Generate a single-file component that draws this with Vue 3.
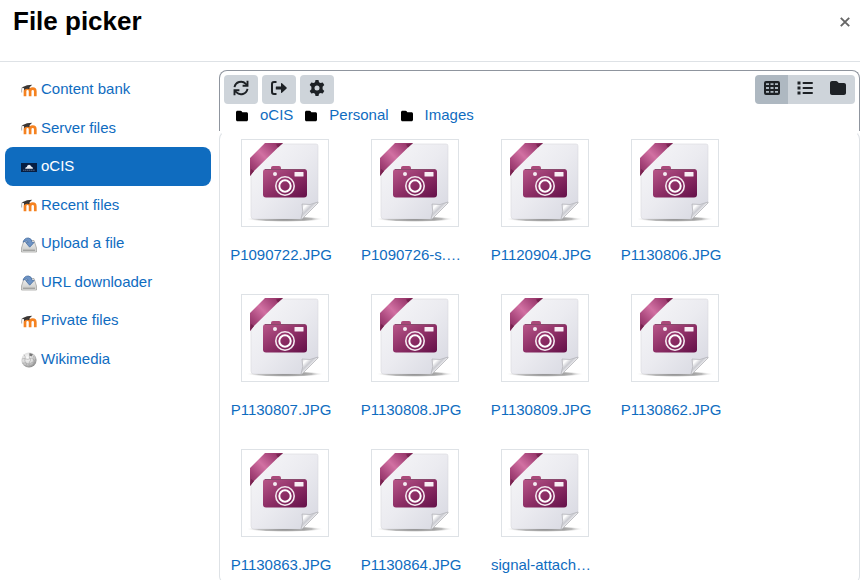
<script setup>
import { ref } from 'vue'

const sources = [
  { name: 'Content bank', icon: 'moodle' },
  { name: 'Server files', icon: 'moodle' },
  { name: 'oCIS', icon: 'ocis' },
  { name: 'Recent files', icon: 'moodle' },
  { name: 'Upload a file', icon: 'drive' },
  { name: 'URL downloader', icon: 'drive' },
  { name: 'Private files', icon: 'moodle' },
  { name: 'Wikimedia', icon: 'globe' },
]
const active = ref('oCIS')
const crumbs = ['oCIS', 'Personal', 'Images']
const files = [
  'P1090722.JPG', 'P1090726-s.…', 'P1120904.JPG', 'P1130806.JPG',
  'P1130807.JPG', 'P1130808.JPG', 'P1130809.JPG', 'P1130862.JPG',
  'P1130863.JPG', 'P1130864.JPG', 'signal-attach…',
]
const view = ref('grid')
</script>

<template>
  <div class="picker">
    <svg class="defs" aria-hidden="true">
      <defs>
        <linearGradient id="paper" x1="0" y1="0" x2="1" y2="1">
          <stop offset="0" stop-color="#f7f7f9" />
          <stop offset="0.5" stop-color="#ebebf0" />
          <stop offset="1" stop-color="#d6d7e0" />
        </linearGradient>
        <linearGradient id="ribbon" gradientUnits="userSpaceOnUse" x1="5" y1="30" x2="36" y2="0">
          <stop offset="0" stop-color="#8b3062" />
          <stop offset="0.2" stop-color="#a64479" />
          <stop offset="0.5" stop-color="#d170a2" />
          <stop offset="0.8" stop-color="#a64479" />
          <stop offset="1" stop-color="#8b2e60" />
        </linearGradient>
        <linearGradient id="body" x1="0" y1="0" x2="1" y2="1">
          <stop offset="0" stop-color="#b9588a" />
          <stop offset="0.5" stop-color="#8e2f66" />
          <stop offset="1" stop-color="#641048" />
        </linearGradient>
        <linearGradient id="curl" x1="0" y1="0" x2="1" y2="1">
          <stop offset="0" stop-color="#c6c7cd" />
          <stop offset="0.25" stop-color="#ffffff" />
          <stop offset="0.42" stop-color="#c9cad0" />
          <stop offset="0.55" stop-color="#f5f5f7" />
        </linearGradient>
        <radialGradient id="shade">
          <stop offset="0" stop-color="#666" stop-opacity="1" />
          <stop offset="0.7" stop-color="#888" stop-opacity="0.6" />
          <stop offset="1" stop-color="#fff" stop-opacity="0" />
        </radialGradient>
        <radialGradient id="ball" cx="0.4" cy="0.35" r="0.65">
          <stop offset="0" stop-color="#fafafa" />
          <stop offset="0.6" stop-color="#dadada" />
          <stop offset="1" stop-color="#8d8d8d" />
        </radialGradient>
        <linearGradient id="metal" x1="0" y1="0" x2="0" y2="1">
          <stop offset="0" stop-color="#f0f0f0" />
          <stop offset="1" stop-color="#c9cac8" />
        </linearGradient>
        <symbol id="i-moodle" viewBox="0 0 16 16">
          <path d="M4 13.200V8.200C4 4.800 9.100 4.800 9.100 8.200V13.200M9.100 8.200C9.100 4.800 14.300 4.800 14.300 8.200V13.200" fill="none" stroke="#f58220" stroke-width="2.700" />
          <path d="M.6 4.600 6 2.300 11.200 1.700 8.600 4.200 8.300 6.300Q5.500 5 3.200 7.200L3 5.200Z" fill="#3b3735" />
          <path d="M1 4.800Q.4 6.500 .7 9.500" fill="none" stroke="#888" stroke-width=".7" />
        </symbol>
        <symbol id="i-ocis" viewBox="0 0 16 16">
          <path d="M0 3H16V12H0Z" fill="#061e42" />
          <path d="M4.200 8.800Q4.200 7.200 5.800 7 6 5 8 4.800 9.700 4.800 10.100 6.400 12 6.600 12 8.800Z" fill="#e9eef5" />
          <path d="M2 10.200H14" stroke="#75849b" stroke-width=".8" stroke-dasharray="1.400 .5" />
        </symbol>
        <symbol id="i-drive" viewBox="0 0 16 16">
          <path d="M3 3.500H13L15.500 11V15H.5V11Z" fill="url(#metal)" stroke="#999a97" stroke-width=".7" />
          <path d="M.9 11.300H15.100V14.700H.9Z" fill="#d2d3d1" />
          <path d="M2 13.200H14" stroke="#8d8e8c" stroke-width="1" />
          <path d="M2 5.200Q3.500.6 7.600 1 10.800 1.400 11 5.400H13.200L8.700 10.200 4.600 5.400H7.200Q6.400 3 2 5.200Z" fill="#6d93c5" stroke="#40699b" stroke-width=".7" />
        </symbol>
        <symbol id="i-globe" viewBox="0 0 16 16">
          <circle cx="8" cy="8" r="7.600" fill="url(#ball)" />
          <path d="M3 2.500Q5 5 4 7T5 11 4 14M9 3Q7.500 5 9 6.500T8.500 10 10 15M12.500 4Q11.500 6 12.800 8T12 13M1 7Q3 6 5 7T9 6.500 12 7.500 15 7M1.500 11.500Q4 10 6 11.500T10 11 14.400 11" fill="none" stroke="#999" stroke-width=".5" />
          <path d="M8.500 1 12 2.200 10.500 4.500 8.300 3.500Z" fill="#777" />
        </symbol>
        <symbol id="i-folder" viewBox="0 0 512 512">
          <path d="M64 480H448c35 0 64-29 64-64V160c0-35-29-64-64-64H288c-10 0-20-5-26-13L243 58C231 41 212 32 192 32H64C29 32 0 61 0 96V416c0 35 29 64 64 64Z" />
        </symbol>
        <symbol id="i-file" viewBox="0 0 80 80">
          <ellipse cx="40" cy="76" rx="39" ry="3" fill="url(#shade)" />
          <path d="M22 1H71Q73 1 73 3V60L57 76H9Q6 76 6 73V17Z" fill="url(#paper)" stroke="#d8d8dd" stroke-width=".6" />
          <path d="M73 59Q65 63 57 61Q59 69 56 76L57 76 73 60Z" fill="url(#curl)" stroke="#a7a8ad" stroke-width=".6" />
          <path d="M20 0H38L34 3.500 9 28 5 33V15Z" fill="url(#ribbon)" />
          <path d="M38 0 31 1.500 33 4.500ZM5 33 6 26 9 28Z" fill="#782350" />
          <path d="M26 25Q26 23 28 23H34Q36 23 36 25V27H26Z" fill="#aa4a7a" />
          <rect x="18" y="26" width="44" height="28.500" rx="3" fill="url(#body)" />
          <path d="M20 26.500H60" stroke="#8a4a6d" stroke-width="1" />
          <circle cx="30" cy="31" r="2" fill="#f4edf2" />
          <rect x="49.500" y="29" width="9" height="4.500" rx=".5" fill="#f8edf4" />
          <circle cx="40" cy="43" r="9.200" fill="none" stroke="#f4eaf0" stroke-width="1.600" />
          <circle cx="40" cy="43" r="5.700" fill="none" stroke="#fff" stroke-width="2" />
        </symbol>
      </defs>
    </svg>

    <header class="header">
      <h1>File picker</h1>
      <button class="close" type="button" aria-label="Close">
        <svg viewBox="0 0 10 10"><path d="M.8 .8 9.200 9.200M9.200 .8 .8 9.200" fill="none" stroke="currentColor" stroke-width="1.900" /></svg>
      </button>
    </header>

    <div class="layout">
      <nav class="sources">
        <a
          v-for="s in sources"
          :key="s.name"
          href="#"
          class="source"
          :class="{ active: s.name === active }"
          @click.prevent="active = s.name"
        >
          <svg class="source-icon"><use :href="'#i-' + s.icon" /></svg>
          <span>{{ s.name }}</span>
        </a>
      </nav>

      <main class="panel">
        <div class="toolbar">
          <div class="tools">
            <button class="tool" type="button" aria-label="Refresh">
              <svg viewBox="0 0 16 16" fill="none" stroke="currentColor" stroke-width="1.900">
                <path d="M1.500 7.200A6.600 6.600 0 0 1 12.800 3.800L14 5M14.500 8.800A6.600 6.600 0 0 1 3.200 12.200L2 11" />
                <path d="M14.500 .8V5.700H9.600M1.500 15.200V10.300H6.400" />
              </svg>
            </button>
            <button class="tool" type="button" aria-label="Logout">
              <svg viewBox="0 0 16 16">
                <path d="M5.500 2.100H3Q1 2.100 1 4.100V11.900Q1 13.900 3 13.900H5.500" fill="none" stroke="currentColor" stroke-width="2" />
                <path d="M5.200 6.400H10V3.700Q10 2.500 11 3.300L15.600 7.400Q16 8 15.600 8.600L11 12.700Q10 13.500 10 12.300V9.600H5.200Q4.800 9.600 4.800 9V7Q4.800 6.400 5.200 6.400Z" fill="currentColor" />
              </svg>
            </button>
            <button class="tool" type="button" aria-label="Settings">
              <svg viewBox="0 0 16 16">
                <path fill="currentColor" fill-rule="evenodd" d="M6.500 0H9.500L10 2.300 11.500 3.100 13.700 2.400 15.300 5 13.600 6.700V9.300L15.300 11 13.700 13.600 11.500 12.900 10 13.700 9.500 16H6.500L6 13.700 4.500 12.900 2.300 13.600.7 11 2.400 9.300V6.700L.7 5 2.300 2.400 4.500 3.100 6 2.300ZM8 5.500A2.500 2.500 0 1 0 8 10.500 2.500 2.500 0 1 0 8 5.500Z" />
              </svg>
            </button>
          </div>
          <div class="views">
            <button class="view" :class="{ on: view === 'grid' }" type="button" aria-label="Display as icons" @click="view = 'grid'">
              <svg viewBox="0 0 16 16">
                <path fill="currentColor" fill-rule="evenodd" d="M2 1H14Q16 1 16 3V13Q16 15 14 15H2Q0 15 0 13V3Q0 1 2 1ZM2 3.200V5H5V3.200ZM6.500 3.200V5H9.500V3.200ZM11 3.200V5H14V3.200ZM2 7V9H5V7ZM6.500 7V9H9.500V7ZM11 7V9H14V7ZM2 11V12.800H5V11ZM6.500 11V12.800H9.500V11ZM11 11V12.800H14V11Z" />
              </svg>
            </button>
            <button class="view" :class="{ on: view === 'list' }" type="button" aria-label="Display as list" @click="view = 'list'">
              <svg viewBox="0 0 16 16">
                <path fill="none" stroke="currentColor" stroke-width="2" stroke-linecap="round" d="M6.500 3H15M6.500 8H15M6.500 13H15" />
                <path fill="currentColor" d="M.5 1.500H3.500V4.500H.5ZM.5 6.500H3.500V9.500H.5ZM.5 11.500H3.500V14.500H.5Z" />
              </svg>
            </button>
            <button class="view" :class="{ on: view === 'tree' }" type="button" aria-label="Display as tree" @click="view = 'tree'">
              <svg fill="currentColor"><use href="#i-folder" /></svg>
            </button>
          </div>
        </div>

        <div class="path">
          <span v-for="c in crumbs" :key="c" class="crumb">
            <svg><use href="#i-folder" /></svg>
            <a href="#">{{ c }}</a>
          </span>
        </div>

        <div class="files">
          <a v-for="f in files" :key="f" href="#" class="file">
            <span class="thumb"><svg><use href="#i-file" /></svg></span>
            <span class="name">{{ f }}</span>
          </a>
        </div>
      </main>
    </div>
  </div>
</template>

<style>
body {
  background: #fff;
}
</style>

<style scoped>
* {
  box-sizing: border-box;
}
.picker {
  display: flex;
  flex-direction: column;
  height: 100vh;
  overflow: hidden;
  font-family: "Liberation Sans", Arial, sans-serif;
  font-size: 15px;
  line-height: 1.5;
  color: #1d2125;
}
.defs {
  position: absolute;
  width: 0;
  height: 0;
}
a {
  color: #0f6cbf;
  text-decoration: none;
}
button {
  border: 0;
  padding: 0;
  color: #1d2125;
  cursor: pointer;
}
.header {
  display: flex;
  flex: none;
  justify-content: space-between;
  padding: 5px 10px 22px 13px;
  border-bottom: 1px solid #dee2e6;
}
h1 {
  margin: 0;
  font-size: 26px;
  line-height: 32px;
  color: #000;
}
.close {
  display: flex;
  align-items: center;
  height: 34px;
  background: none;
  color: #666;
}
.close svg {
  width: 10px;
  height: 10px;
}
.layout {
  display: flex;
  flex: 1;
  min-height: 0;
  padding-top: 8px;
}
.sources {
  display: flex;
  flex: none;
  flex-direction: column;
  width: 219px;
  padding: 0 8px 0 5px;
}
.source {
  display: flex;
  align-items: center;
  gap: 4px;
  padding: 8px 16px;
  border-radius: 8px;
}
.source.active {
  background: #0f6cbf;
  color: #fff;
}
.source-icon {
  width: 16px;
  height: 16px;
  margin-top: 3px;
}
.panel {
  display: flex;
  flex: 1;
  flex-direction: column;
  min-width: 0;
  margin-bottom: -4px;
}
.toolbar {
  display: flex;
  justify-content: space-between;
  padding: 4px 4px 0;
  border: 1px solid #8f959e;
  border-bottom: 0;
  border-radius: 8px 8px 0 0;
}
.tools {
  display: flex;
  gap: 4px;
}
.tool,
.view {
  display: flex;
  align-items: center;
  justify-content: center;
  width: 34px;
  height: 29px;
  padding-bottom: 3px;
  border-radius: 4px;
  background: #ced4da;
}
.tool svg,
.view svg {
  width: 16px;
  height: 16px;
}
.views {
  display: flex;
  width: 100px;
  overflow: hidden;
  border-radius: 4px;
}
.view {
  flex: 1;
  border-radius: 0;
}
.view.on {
  background: #aeb8c1;
}
.path {
  display: flex;
  gap: 12px;
  height: 27px;
  padding-left: 16px;
  border: solid #8f959e;
  border-width: 0 1px;
}
.crumb {
  display: flex;
  align-items: center;
  gap: 12px;
  height: 23px;
}
.crumb svg {
  width: 12px;
  height: 12px;
}
.files {
  display: flex;
  flex: 1;
  flex-wrap: wrap;
  align-content: flex-start;
  gap: 20px;
  min-height: 0;
  padding: 7px 6px;
  border: 1px solid #dee2e6;
  border-top-color: transparent;
  border-radius: 8px;
}
.file {
  width: 110px;
  height: 135px;
}
.thumb {
  display: flex;
  width: 88px;
  height: 88px;
  margin-left: 15px;
  padding: 3px;
  border: 1px solid #dee2e6;
}
.thumb svg {
  width: 80px;
  height: 80px;
}
.name {
  display: block;
  padding-top: 17px;
  text-align: center;
  white-space: nowrap;
}
</style>
